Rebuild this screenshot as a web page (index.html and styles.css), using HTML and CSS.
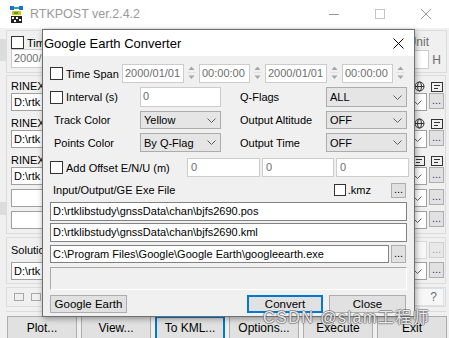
FILE: index.html
```html
<!DOCTYPE html>
<html>
    <head>
        <title>RTKPOST - Google Earth Converter</title>
        <link rel="stylesheet" href="styles.css">
    </head>
    <body>

        <div class="app">
            <div class="titlebar">
                <svg class="appicon" width="13" height="17" viewBox="0 0 13 17">
                    <rect x="0" y="0" width="4" height="4" fill="#1f6fd6"/>
                    <rect x="9" y="0" width="4" height="4" fill="#1f6fd6"/>
                    <rect x="4" y="1" width="5" height="2" fill="#2aa3b8"/>
                    <rect x="2" y="5" width="9" height="4" fill="#d9c400"/>
                    <rect x="4" y="6" width="4" height="2" fill="#3fa33a"/>
                    <rect x="1" y="10" width="11" height="7" fill="#222"/>
                    <rect x="2" y="11" width="2" height="2" fill="#fff"/>
                    <rect x="6" y="11" width="2" height="2" fill="#fff"/>
                    <rect x="4" y="14" width="2" height="2" fill="#fff"/>
                    <rect x="9" y="13" width="2" height="2" fill="#fff"/>
                </svg>
                <span class="apptitle">RTKPOST ver.2.4.2</span>
                <div class="wincontrols">
                    <span><svg width="10" height="10"><path d="M0 5.5h10" stroke="#9a9a9a"/></svg></span>
                    <span><svg width="10" height="10"><rect x="0.5" y="0.5" width="9" height="9" fill="none" stroke="#c4c4c4"/></svg></span>
                    <span><svg width="10" height="10"><path d="M0 0L10 10M10 0L0 10" stroke="#9a9a9a"/></svg></span>
                </div>
            </div>

            <div class="appbody">
                <div class="edge"></div>
                <div class="content">

                    <div class="toprow">
                        <div class="grp timegrp">
                            <div class="chkrow"><span class="chk"></span>Tim</div>
                            <div class="field dis startdate">2000/</div>
                        </div>
                        <div class="grp unitgrp">
                            <div class="unitlabel">Unit</div>
                            <div class="unitrow"><div class="field dis unitfield"></div><span class="dim">H</span></div>
                        </div>
                    </div>

                    <div class="grp inputs">
                        <div class="lblrow first">
                            <span class="lbltext">RINEX</span>
                            <span class="icons">
                                <svg width="11" height="11" viewBox="0 0 11 11"><g fill="none" stroke="#333"><circle cx="5.5" cy="5.5" r="4.5"/><ellipse cx="5.5" cy="5.5" rx="2" ry="4.5"/><path d="M1 5.5h9"/></g></svg>
                                <svg width="12" height="10" viewBox="0 0 12 10"><g fill="none" stroke="#333"><rect x="0.5" y="0.5" width="11" height="9"/><path d="M3 3.5h6M3 6.5h4"/></g></svg>
                            </span>
                        </div>
                        <div class="comborow">
                            <div class="combo">D:\rtk<svg width="9" height="5" viewBox="0 0 9 5"><polyline points="0.5,0.5 4.5,4.5 8.5,0.5" fill="none" stroke="#606060"/></svg></div>
                            <span class="dots">...</span>
                        </div>
                        <div class="lblrow">
                            <span class="lbltext">RINEX</span>
                            <span class="icons">
                                <svg width="11" height="11" viewBox="0 0 11 11"><g fill="none" stroke="#333"><circle cx="5.5" cy="5.5" r="4.5"/><ellipse cx="5.5" cy="5.5" rx="2" ry="4.5"/><path d="M1 5.5h9"/></g></svg>
                                <svg width="12" height="10" viewBox="0 0 12 10"><g fill="none" stroke="#333"><rect x="0.5" y="0.5" width="11" height="9"/><path d="M3 3.5h6M3 6.5h4"/></g></svg>
                            </span>
                        </div>
                        <div class="comborow">
                            <div class="combo">D:\rtk<svg width="9" height="5" viewBox="0 0 9 5"><polyline points="0.5,0.5 4.5,4.5 8.5,0.5" fill="none" stroke="#606060"/></svg></div>
                            <span class="dots">...</span>
                        </div>
                        <div class="lblrow">
                            <span class="lbltext">RINEX</span>
                            <span class="icons">
                                <svg width="12" height="10" viewBox="0 0 12 10"><g fill="none" stroke="#333"><rect x="0.5" y="0.5" width="11" height="9"/><path d="M3 3.5h6M3 6.5h4"/></g></svg>
                                <svg width="12" height="10" viewBox="0 0 12 10"><g fill="none" stroke="#333"><rect x="0.5" y="0.5" width="11" height="9"/><path d="M3 3.5h6M3 6.5h4"/></g></svg>
                            </span>
                        </div>
                        <div class="comborow">
                            <div class="combo">D:\rtk<svg width="9" height="5" viewBox="0 0 9 5"><polyline points="0.5,0.5 4.5,4.5 8.5,0.5" fill="none" stroke="#606060"/></svg></div>
                            <span class="dots">...</span>
                        </div>
                        <div class="comborow gap">
                            <div class="combo"><svg width="9" height="5" viewBox="0 0 9 5"><polyline points="0.5,0.5 4.5,4.5 8.5,0.5" fill="none" stroke="#606060"/></svg></div>
                            <span class="dots">...</span>
                        </div>
                        <div class="comborow gap">
                            <div class="combo"><svg width="9" height="5" viewBox="0 0 9 5"><polyline points="0.5,0.5 4.5,4.5 8.5,0.5" fill="none" stroke="#606060"/></svg></div>
                            <span class="dots">...</span>
                        </div>
                    </div>

                    <div class="grp solgrp">
                        <div class="solrow">
                            <span class="lbltext">Solutio</span>
                            <span class="disbox"></span>
                            <span class="dots dis">...</span>
                        </div>
                        <div class="comborow">
                            <div class="combo">D:\rtk<svg width="9" height="5" viewBox="0 0 9 5"><polyline points="0.5,0.5 4.5,4.5 8.5,0.5" fill="none" stroke="#606060"/></svg></div>
                            <span class="dots">...</span>
                        </div>
                    </div>

                    <div class="grp optgrp">
                        <span class="sq"></span>
                        <span class="sq"></span>
                        <span class="qbox">?</span>
                    </div>

                    <div class="progress"></div>

                    <div class="btnbar">
                        <div class="btn">Plot...</div>
                        <div class="btn">View...</div>
                        <div class="btn focus">To KML...</div>
                        <div class="btn">Options...</div>
                        <div class="btn">Execute</div>
                        <div class="btn">Exit</div>
                    </div>

                </div>
            </div>
        </div>

        <!-- converter dialog on top of the main window -->
        <div class="dialog">
            <div class="dlg-title">
                <span class="dlg-name">Google Earth Converter</span>
                <svg class="dlg-close" width="11" height="11" viewBox="0 0 11 11"><path d="M0.5 0.5L10.5 10.5M10.5 0.5L0.5 10.5" stroke="#000"/></svg>
            </div>
            <div class="dlg-body">

                <div class="row r1">
                    <div class="chkbox span"><span class="chk"></span>Time Span</div>
                    <div class="field dis date">2000/01/01</div>
                    <svg class="spin" width="11" height="19" viewBox="0 0 11 19"><path d="M5.5 2.5L8.5 6H2.5Z M2.5 11.5H8.5L5.5 15Z" fill="#a6a6a6"/><path d="M1 8.5H10" stroke="#e2e2e2"/></svg>
                    <div class="field dis time">00:00:00</div>
                    <svg class="spin" width="11" height="19" viewBox="0 0 11 19"><path d="M5.5 2.5L8.5 6H2.5Z M2.5 11.5H8.5L5.5 15Z" fill="#a6a6a6"/><path d="M1 8.5H10" stroke="#e2e2e2"/></svg>
                    <div class="field dis date">2000/01/01</div>
                    <svg class="spin" width="11" height="19" viewBox="0 0 11 19"><path d="M5.5 2.5L8.5 6H2.5Z M2.5 11.5H8.5L5.5 15Z" fill="#a6a6a6"/><path d="M1 8.5H10" stroke="#e2e2e2"/></svg>
                    <div class="field dis time">00:00:00</div>
                    <svg class="spin" width="11" height="19" viewBox="0 0 11 19"><path d="M5.5 2.5L8.5 6H2.5Z M2.5 11.5H8.5L5.5 15Z" fill="#a6a6a6"/><path d="M1 8.5H10" stroke="#e2e2e2"/></svg>
                </div>

                <div class="opts">
                    <div class="chkbox"><span class="chk"></span>Interval (s)</div>
                    <div class="field dis">0</div>
                    <span></span>
                    <span class="lbl">Q-Flags</span>
                    <div class="select">ALL<svg width="9" height="5" viewBox="0 0 9 5"><polyline points="0.5,0.5 4.5,4.5 8.5,0.5" fill="none" stroke="#606060"/></svg></div>

                    <span class="lbl ind">Track Color</span>
                    <div class="select">Yellow<svg width="9" height="5" viewBox="0 0 9 5"><polyline points="0.5,0.5 4.5,4.5 8.5,0.5" fill="none" stroke="#606060"/></svg></div>
                    <span></span>
                    <span class="lbl">Output Altitude</span>
                    <div class="select">OFF<svg width="9" height="5" viewBox="0 0 9 5"><polyline points="0.5,0.5 4.5,4.5 8.5,0.5" fill="none" stroke="#606060"/></svg></div>

                    <span class="lbl ind">Points Color</span>
                    <div class="select">By Q-Flag<svg width="9" height="5" viewBox="0 0 9 5"><polyline points="0.5,0.5 4.5,4.5 8.5,0.5" fill="none" stroke="#606060"/></svg></div>
                    <span></span>
                    <span class="lbl">Output Time</span>
                    <div class="select">OFF<svg width="9" height="5" viewBox="0 0 9 5"><polyline points="0.5,0.5 4.5,4.5 8.5,0.5" fill="none" stroke="#606060"/></svg></div>
                </div>

                <div class="offset">
                    <div class="chkbox"><span class="chk"></span>Add Offset E/N/U (m)</div>
                    <div class="field dis">0</div>
                    <div class="field dis">0</div>
                    <div class="field dis">0</div>
                </div>

                <div class="row filehead">
                    <span class="filelabel">Input/Output/GE Exe File</span>
                    <div class="chkbox kmz"><span class="chk"></span>.kmz</div>
                    <span class="dbtn">...</span>
                </div>

                <div class="field path">D:\rtklibstudy\gnssData\chan\bjfs2690.pos</div>
                <div class="field path p2">D:\rtklibstudy\gnssData\chan\bjfs2690.kml</div>
                <div class="row exerow">
                    <div class="field path">C:\Program Files\Google\Google Earth\googleearth.exe</div>
                    <span class="dbtn">...</span>
                </div>

                <div class="msg"></div>

                <div class="row btns">
                    <div class="btn ge">Google Earth</div>
                    <div class="btn focus convert">Convert</div>
                    <div class="btn close">Close</div>
                </div>

            </div>
        </div>

        <div class="watermark">CSDN @slam工程师</div>

    </body>
</html>
```

FILE: styles.css
```css
*{
    box-sizing: border-box;
}

body{
    margin: 0;
    width: 449px;
    height: 338px;
    overflow: hidden;
    position: relative;

    background-color: #f0f0f0;
    font-family: "Liberation Sans", Arial, sans-serif;
    font-size: 11px;
    color: #000;
}

svg{
    display: block;
}

/* ---------- main window ---------- */

.titlebar{
    height: 28px;
    background-color: #fff;

    display: flex;
    align-items: center;

    padding-left: 10px;
}

.appicon{
    margin-right: 7px;
}

.apptitle{
    flex: 1;
    font-size: 12.5px;
    color: #9a9a9a;
}

.wincontrols{
    display: flex;
    height: 100%;
}

.wincontrols span{
    width: 46px;
    display: flex;
    align-items: center;
    justify-content: center;
}

.appbody{
    display: flex;
    height: 310px;
}

.edge{
    width: 7px;
    background: linear-gradient(to bottom,
        #f0f0f0 11px, #dcdcdc 11px, #dcdcdc 33px,
        #f0f0f0 33px, #f0f0f0 174px, #dcdcdc 174px,
        #dcdcdc 187px, #f0f0f0 187px);
}

.content{
    flex: 1;
    padding: 2px 2px 0 0;

    display: flex;
    flex-direction: column;
}

.grp{
    border: 1px solid #dcdcdc;
}

.toprow{
    display: flex;
    gap: 2px;
    height: 43px;
}

.timegrp{
    flex: 1;
    padding: 5px 4px;
}

.chkrow{
    display: flex;
    align-items: center;
    height: 13px;
    white-space: nowrap;
}

.chk{
    width: 13px;
    height: 13px;
    flex-shrink: 0;
    background-color: #fff;
    border: 1px solid #333;
    margin-right: 3px;
}

.startdate{
    width: 90px;
    height: 18px;
}

.unitgrp{
    width: 60px;
    padding-top: 5px;
}

.unitlabel{
    text-align: right;
    padding-right: 17px;
    color: #6d6d6d;
    font-size: 12px;
    line-height: 13px;
}

.unitrow{
    display: flex;
    justify-content: flex-end;
    align-items: center;
    margin-top: 1px;
}

.unitfield{
    width: 24px;
    height: 18px;
    background-color: #f9f9f9;
}

.dim{
    color: #6d6d6d;
    font-size: 12px;
    margin: 0 5px 0 3px;
}

.inputs{
    margin: 2px 1px 0 0;
    height: 160px;
    padding: 4px 1px 4px 4px;
}

.lblrow{
    height: 19px;
    display: flex;
    align-items: flex-end;
    line-height: 13px;
}

.lblrow.first{
    height: 13px;
}

.lbltext{
    flex: 1;
    white-space: nowrap;
}

.icons{
    display: flex;
    gap: 6px;
    align-items: center;
    margin: 0 1px 1px 0;
}

.comborow{
    display: flex;
    gap: 2px;
    height: 18px;
}

.comborow.gap{
    margin-top: 4px;
}

.combo{
    flex: 1;
    background-color: #fff;
    border: 1px solid #a0a0a0;

    display: flex;
    align-items: center;

    padding: 0 4px 0 2px;
    white-space: nowrap;
}

.combo svg{
    margin-left: auto;
}

.dots{
    width: 15px;
    height: 16px;
    background-color: #e1e1e1;
    border: 1px solid #adadad;
    color: #3a2f8f;
    text-align: center;
    line-height: 13px;
}

.dots.dis{
    color: #a0a0a0;
    background-color: #e8e8e8;
    border-color: #cfcfcf;
}

.solgrp{
    margin: 3px 1px 0 0;
    height: 47px;
    padding: 3px 1px 3px 4px;
}

.solrow{
    height: 18px;
    margin-bottom: 3px;
    display: flex;
    align-items: center;
    gap: 2px;
}

.disbox{
    width: 14px;
    height: 18px;
    background-color: #f7f7f7;
    border: 1px solid #d9d9d9;
}

.optgrp{
    margin: 3px 1px 0 0;
    height: 20px;
    padding: 0 1px 0 7px;

    display: flex;
    align-items: center;
    gap: 7px;
}

.sq{
    width: 10px;
    height: 8px;
    border: 1px solid #a8a8a8;
    background-color: #f0f0f0;
}

.qbox{
    margin-left: auto;
    width: 150px;
    height: 18px;
    background-color: #f7f7f7;
    border: 1px solid #e0e0e0;
    color: #6d6d6d;
    text-align: right;
    padding-right: 6px;
    line-height: 16px;
    font-size: 12px;
}

.progress{
    margin: 4px 1px 0 0;
    height: 5px;
    border-top: 1px solid #dcdcdc;
    background-color: #f4f4f4;
}

.btnbar{
    display: flex;
    gap: 4px;
    margin-top: 4px;
    padding-left: 1px;
}

.btn{
    background-color: #e1e1e1;
    border: 1px solid #adadad;

    display: flex;
    align-items: center;
    justify-content: center;
    white-space: nowrap;
}

.btnbar .btn{
    width: 70px;
    height: 24px;
    font-size: 12px;
}

.btn.focus{
    border: 2px solid #0078d7;
}

/* ---------- converter dialog ---------- */

.dialog{
    position: absolute;
    left: 42px;
    top: 29px;
    width: 373px;
    height: 288px;

    background-color: #f0f0f0;
    border: 1px solid #6f6f6f;
    box-shadow: 1px 2px 6px rgba(0,0,0,0.35);
}

.dlg-title{
    height: 26px;
    background-color: #fff;

    display: flex;
    align-items: center;
    padding: 0 10px 0 1px;
}

.dlg-name{
    flex: 1;
    font-size: 13px;
}

.dlg-body{
    padding: 8px 7px 0 7px;
}

.row{
    display: flex;
    align-items: center;
}

.r1{
    height: 19px;
    gap: 2px;
}

.chkbox{
    display: flex;
    align-items: center;
    white-space: nowrap;
}

.chkbox.span{
    width: 70px;
}

.field{
    height: 19px;
    background-color: #fff;
    border: 1px solid #828282;
    padding: 0 2px;
    line-height: 17px;
    white-space: nowrap;
    overflow: hidden;
}

.field.dis{
    border-color: #cccccc;
    color: #6d6d6d;
}

.date{
    width: 62px;
}

.time{
    width: 51px;
}

.opts{
    display: grid;
    grid-template-columns: 90px 81px 19px 86px 81px;
    grid-template-rows: 20px 18px 19px;
    row-gap: 4px;
    margin-top: 4px;
    align-items: center;
}

.opts .field{
    height: 20px;
}

.lbl.ind{
    padding-left: 4px;
}

.select{
    height: 100%;
    background-color: #e5e5e5;
    border: 1px solid #acacac;

    display: flex;
    align-items: center;
    justify-content: space-between;
    padding: 0 4px 0 3px;
}

.offset{
    display: grid;
    grid-template-columns: 135px 73px 72px 73px;
    column-gap: 2px;
    height: 19px;
    margin-top: 6px;
    align-items: center;
}

.offset .field{
    padding-left: 3px;
}

.filehead{
    height: 14px;
    margin-top: 6px;
}

.filelabel{
    flex: 1;
    padding-left: 3px;
}

.kmz{
    margin-right: 20px;
}

.kmz .chk{
    width: 12px;
    height: 12px;
    margin-right: 2px;
}

.dbtn{
    width: 15px;
    height: 15px;
    margin-right: 1px;
    background-color: #e1e1e1;
    border: 1px solid #adadad;
    text-align: center;
    line-height: 11px;
}

.path{
    margin-top: 5px;
}

.path.p2{
    margin-top: 2px;
}

.exerow{
    margin-top: 3px;
    height: 18px;
    gap: 2px;
}

.exerow .path{
    flex: 1;
    margin-top: 0;
    height: 18px;
    line-height: 16px;
}

.exerow .dbtn{
    height: 18px;
    line-height: 14px;
}

.msg{
    height: 23px;
    margin-top: 4px;
    border: 1px solid #a9a9a9;
    border-right-color: #fff;
    border-bottom-color: #fff;
}

.btns{
    height: 18px;
    margin-top: 5px;
}

.btns .btn{
    height: 18px;
    font-size: 11.5px;
}

.btn.ge{
    width: 77px;
}

.btn.convert{
    width: 76px;
    margin-left: auto;
}

.btn.close{
    width: 77px;
    margin: 0 1px 0 6px;
}

/* ---------- watermark ---------- */

.watermark{
    position: absolute;
    left: 263px;
    top: 309px;

    font-family: "Liberation Sans", "Noto Sans CJK SC", sans-serif;
    font-size: 16px;
    line-height: 18px;
    letter-spacing: 1.5px;
    white-space: nowrap;

    color: rgba(255,255,255,0.85);
    text-shadow: 1px 0 0 rgba(90,90,90,0.55), -1px 0 0 rgba(90,90,90,0.55), 0 1px 0 rgba(90,90,90,0.55), 0 -1px 0 rgba(90,90,90,0.55);
}
```
